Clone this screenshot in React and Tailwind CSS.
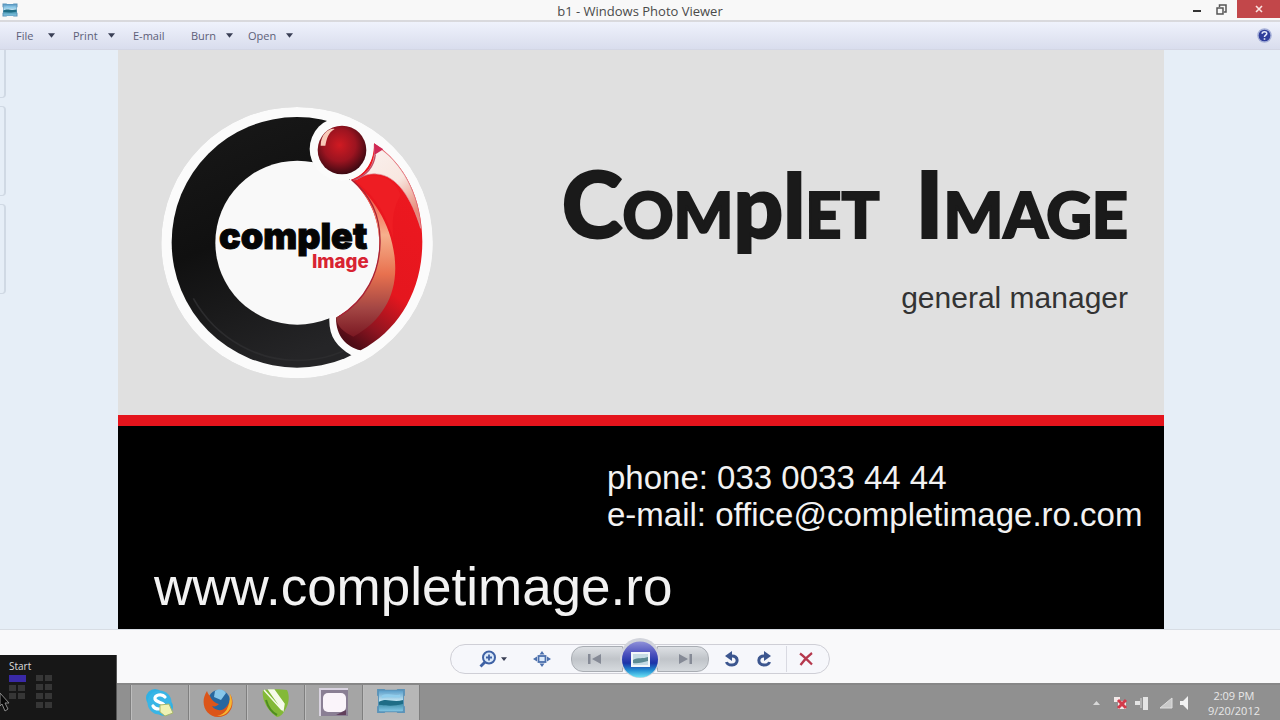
import React from "react";

function PhotoIcon({ className }) {
  return (
    <svg viewBox="0 0 32 28" className={className} aria-hidden="true">
      <defs>
        <linearGradient id="photoSky" x1="0" y1="0" x2="0" y2="1">
          <stop offset="0" stopColor="#5b9fca" />
          <stop offset="0.5" stopColor="#c4e6f4" />
          <stop offset="0.6" stopColor="#3a8ba5" />
          <stop offset="1" stopColor="#83c6e4" />
        </linearGradient>
      </defs>
      <path d="M1 1h8l1 1h12l1-1h8v7l-1 1v10l1 1v7h-8l-1-1H10l-1 1H1v-7l1-1V9L1 8z" fill="#5b93b8" />
      <rect x="3" y="3" width="26" height="22" rx="1" fill="url(#photoSky)" />
      <path d="M3 15c8-5 14 1 26-2v4c-11 3-17 2-26 1z" fill="#1f6d86" />
      <path d="M6 8c6-3 12 1 20-1v3c-8 1-13-1-20 1z" fill="#8fcdec" />
    </svg>
  );
}

function Caret({ className = "w-[7px] h-[5px]" }) {
  return (
    <svg viewBox="0 0 8 5" className={className} aria-hidden="true">
      <path d="M0 0h8L4 5z" fill="#3a3f55" />
    </svg>
  );
}

function TitleBar() {
  return (
    <header className="relative flex h-[22px] items-start justify-between border-b-2 border-[#d9d9dd] bg-[#f8f8f8]">
      <PhotoIcon className="mt-[3px] ml-[2px] h-[14px] w-4" />
      <h1 className="absolute inset-x-0 top-[2px] text-center text-[13px] leading-[18px] text-[#4a4a4a]">
        b1 - Windows Photo Viewer
      </h1>
      <div className="relative flex">
        <button aria-label="Minimize" className="flex h-[18px] w-6 items-center justify-center">
          <svg viewBox="0 0 10 10" className="h-[10px] w-[10px]"><path d="M1 7h8" stroke="#333" strokeWidth="2" /></svg>
        </button>
        <button aria-label="Restore" className="flex h-[18px] w-6 items-center justify-center">
          <svg viewBox="0 0 11 11" className="h-[11px] w-[11px]" fill="none" stroke="#555" strokeWidth="1.5">
            <path d="M1 4h6v6H1zM3.500 3V1H10v7H8" />
          </svg>
        </button>
        <button aria-label="Close" className="ml-1 flex h-[18px] w-[43px] items-center justify-center bg-[#c2474a]">
          <svg viewBox="0 0 8 8" className="h-2 w-2"><path d="M1 1l6 6M7 1L1 7" stroke="#fbe3e1" strokeWidth="1.600" /></svg>
        </button>
      </div>
    </header>
  );
}

function MenuBar() {
  const item = "flex items-center text-[11px] leading-[14px] text-[#5d6078]";
  return (
    <nav className="flex h-7 items-center justify-between border-b border-[#d3d6e4] bg-linear-to-b from-[#eff2fc] to-[#d9dded] pr-2 pl-4">
      <div className="flex items-center">
        <button className={item + " w-[57px] gap-[15px]"}>File <Caret /></button>
        <button className={item + " w-[60px] gap-[10px]"}>Print <Caret /></button>
        <button className={item + " w-[58px]"}>E-mail</button>
        <button className={item + " w-[57px] gap-[10px]"}>Burn <Caret /></button>
        <button className={item + " gap-[10px]"}>Open <Caret /></button>
      </div>
      <button aria-label="Help">
        <svg viewBox="0 0 16 16" className="h-[15px] w-[15px]">
          <circle cx="8" cy="8" r="7" fill="#2f3e9b" stroke="#a6b0d8" strokeWidth="1.500" />
          <path d="M5.500 6.200C5.600 3.200 10.500 3.300 10.400 6.100 10.300 7.600 8 7.700 8 9.500M8 11v1.600" fill="none" stroke="#e6ebfa" strokeWidth="1.700" />
        </svg>
      </button>
    </nav>
  );
}

function Logo() {
  return (
    <svg viewBox="0 0 900 885" className="h-[295px] w-[300px] shrink-0" role="img" aria-label="Complet Image logo">
      <defs>
        <linearGradient id="ring" x1="0" y1="0" x2="0.4" y2="1">
          <stop offset="0" stopColor="#191919" />
          <stop offset="0.5" stopColor="#101010" />
          <stop offset="1" stopColor="#252527" />
        </linearGradient>
        <linearGradient id="body" x1="0.6" y1="0" x2="0.3" y2="1">
          <stop offset="0" stopColor="#ef1820" />
          <stop offset="0.65" stopColor="#e5161e" />
          <stop offset="0.87" stopColor="#8e1420" />
          <stop offset="1" stopColor="#4f0c16" />
        </linearGradient>
        <linearGradient id="sheen" x1="0" y1="0" x2="0" y2="1">
          <stop offset="0" stopColor="#f3352d" />
          <stop offset="0.35" stopColor="#f6b08c" />
          <stop offset="0.6" stopColor="#e8714f" />
          <stop offset="0.82" stopColor="#a34644" />
          <stop offset="1" stopColor="#7a1822" />
        </linearGradient>
        <linearGradient id="glass" x1="0" y1="0" x2="0.6" y2="1">
          <stop offset="0" stopColor="#fbf3f1" />
          <stop offset="0.6" stopColor="#f8e7e0" />
          <stop offset="1" stopColor="#e88a78" />
        </linearGradient>
        <radialGradient id="ball" cx="0.45" cy="0.4" r="0.6">
          <stop offset="0" stopColor="#d01a22" />
          <stop offset="0.55" stopColor="#9c1420" />
          <stop offset="1" stopColor="#3d0912" />
        </radialGradient>
        <clipPath id="disc"><circle cx="441" cy="443" r="407" /></clipPath>
      </defs>
      <g clipPath="url(#disc)">
        <circle cx="441" cy="443" r="407" fill="#fbfbfb" />
        <circle cx="441" cy="442" r="376" fill="url(#ring)" />
        <path d="M130 610C200 735 330 800 450 796C520 794 555 778 580 768" fill="none" stroke="#2c2c2e" strokeWidth="5" />
        <path d="M520 50L700 30L900 200V700L640 800L603 780C560 755 535 725 538 665L600 560V250Z" fill="#fbfbfb" />
      </g>
      <circle cx="442" cy="443" r="246" fill="#f9f9f9" />
      <path d="M672 145C765 205 817 310 817 440C817 585 748 705 632 766C590 755 558 725 558 668C650 620 690 530 688 440C686 365 655 300 603 254C645 240 673 200 672 145Z" fill="url(#body)" />
      <path d="M605 255C668 305 728 390 735 500C742 595 700 675 610 725C580 712 558 690 559 667C648 620 690 535 688 440C686 365 655 300 605 255Z" fill="url(#sheen)" />
      <path d="M612 256C665 228 730 240 752 300C730 340 725 370 730 430C705 350 672 300 612 256Z" fill="#ee1d23" />
      <path d="M605 254C668 305 692 370 690 445C688 530 650 615 565 666" fill="none" stroke="#a82234" strokeWidth="4" />
      <path d="M672 148C760 202 806 300 812 400C785 310 740 240 680 237C655 234 638 244 618 254C655 235 680 205 672 148Z" fill="url(#glass)" stroke="#dd9aa2" strokeWidth="2" />
      <path d="M672 145L700 163L673 180Z" fill="#cf2854" />
      <path d="M676 178C672 215 648 242 610 256" fill="none" stroke="#c24c66" strokeWidth="4" />
      <circle cx="574" cy="162" r="95" fill="#fbfbfb" />
      <circle cx="576" cy="165" r="73" fill="url(#ball)" />
      <path d="M512 152C512 117 538 98 554 102C535 112 530 132 526 152Z" fill="#f8c9b8" />
      <text x="207" y="461" fontFamily="Inter, sans-serif" fontWeight="900" fontSize="108" fill="#050505" stroke="#050505" strokeWidth="3">complet</text>
      <text x="656" y="518" textAnchor="end" fontFamily="Inter, sans-serif" fontWeight="800" fontSize="56" fill="#d82332">Image</text>
    </svg>
  );
}

function BusinessCard() {
  return (
    <article className="flex flex-1 flex-col font-['Liberation_Sans',sans-serif]">
      <section className="flex flex-1 items-start justify-between bg-[#e0e0e0] pt-[45px] pr-9 pl-8">
        <Logo />
        <div className="flex flex-col items-end pt-[53px] text-[#1a1a1a]">
          <h2 className="flex gap-9 font-[Lato,sans-serif] text-[87px] leading-[110px] font-black whitespace-nowrap [-webkit-text-stroke:2px_#1a1a1a]">
            <span>
              <span className="text-[92px]">C</span>
              <span className="text-[63px]">OM</span>pl<span className="text-[63px]">ET</span>
            </span>
            <span>
              <span className="text-[92px]">I</span>
              <span className="text-[63px]">MAGE</span>
            </span>
          </h2>
          <p className="pt-[11px] text-[30px] leading-9 text-[#333]">general manager</p>
        </div>
      </section>
      <div className="h-[11px] bg-[#e4141c]" />
      <section className="flex h-[203px] flex-col justify-between bg-black pt-[33px] pr-6 pb-[14px] pl-9 text-[#f2f2f2]">
        <div className="w-[533px] self-end text-[33px] leading-[37px] whitespace-nowrap">
          <p>phone: 033 0033 44 44</p>
          <p>e-mail: office@completimage.ro.com</p>
        </div>
        <p className="text-[53px] leading-[56px]">www.completimage.ro</p>
      </section>
    </article>
  );
}

function Viewer() {
  return (
    <main className="flex flex-1 bg-[#e6eef7]">
      <div className="flex w-[118px] flex-col gap-2">
        <div className="h-12 w-[6px] rounded-br border-r-2 border-b border-[#d0d9e4]" />
        <div className="h-[90px] w-[6px] rounded-r border-y border-r-2 border-[#d0d9e4]" />
        <div className="h-[90px] w-[6px] rounded-r border-y border-r-2 border-[#d0d9e4]" />
      </div>
      <BusinessCard />
      <div className="w-[116px]" />
    </main>
  );
}

function Controls() {
  const skip = "flex h-[26px] items-center border border-[#a9adb3] bg-linear-to-b from-[#dde0e4] via-[#c0c4c9] to-[#d6dade]";
  return (
    <div className="flex h-[54px] items-center justify-center border-t border-[#d8dde4] bg-[#f9f9fa] pt-1">
      <div className="flex h-[30px] w-[380px] items-center rounded-full border border-[#cfcfd6] bg-[#f6f7fb]">
        <button aria-label="Zoom" className="ml-7 flex items-center gap-1">
          <svg viewBox="0 0 18 18" className="h-[18px] w-[18px]" fill="none" stroke="#3f62a5">
            <circle cx="10" cy="7.500" r="6" fill="#dceafa" strokeWidth="2" />
            <path d="M7 7.500h6M10 4.500v6" strokeWidth="1.800" />
            <path d="M6 12l-4.500 4.500" strokeWidth="2.800" />
          </svg>
          <Caret className="h-1 w-[6px]" />
        </button>
        <button aria-label="Fit to window" className="ml-[26px]">
          <svg viewBox="0 0 18 18" className="h-[18px] w-[18px]" fill="#4c70ad">
            <path d="M9 1l2.500 3.500h-5zM9 17l2.500-3.500h-5zM0 9l4-2.500v5zM18 9l-4-2.500v5z" />
            <rect x="5.500" y="6" width="7" height="6" fill="#dceafa" stroke="#4c70ad" strokeWidth="1.800" />
          </svg>
        </button>
        <div className="ml-5 flex items-center">
          <button aria-label="Previous" className={skip + " w-[52px] rounded-l-xl pl-4"}>
            <svg viewBox="0 0 14 10" className="h-[10px] w-[14px]" fill="#858a96"><path d="M0 0h2.500v10H0zM13 0v10L4 5z" /></svg>
          </button>
          <button aria-label="Play slide show" className="z-10 -mx-1 h-[42px] w-[42px]">
            <svg viewBox="0 0 42 42" className="h-[42px] w-[42px]">
              <defs>
                <linearGradient id="play" x1="0" y1="0" x2="0" y2="1">
                  <stop offset="0" stopColor="#8f90d8" />
                  <stop offset="0.35" stopColor="#4b50bd" />
                  <stop offset="0.6" stopColor="#1c33a8" />
                  <stop offset="0.8" stopColor="#228fd2" />
                  <stop offset="1" stopColor="#6ee5f6" />
                </linearGradient>
              </defs>
              <circle cx="21" cy="20" r="20" fill="#d2d4db" />
              <circle cx="21" cy="21.500" r="18" fill="url(#play)" />
              <rect x="12" y="14" width="19" height="15" fill="#f2f7fa" />
              <rect x="14" y="16" width="15" height="11" fill="#c4dbe4" />
              <path d="M14 22c5-3 10-1 15-3v4c-5 1-10 3-15 2z" fill="#5c8b94" />
            </svg>
          </button>
          <button aria-label="Next" className={skip + " w-[52px] justify-end rounded-r-xl pr-4"}>
            <svg viewBox="0 0 14 10" className="h-[10px] w-[14px]" fill="#858a96"><path d="M1 0v10l9-5zM11.500 0H14v10h-2.500z" /></svg>
          </button>
        </div>
        <button aria-label="Rotate counterclockwise" className="ml-[15px]">
          <svg viewBox="0 0 16 18" className="h-[18px] w-4">
            <path d="M7 6c8-1 8 9 1 9-3 0-5-1-5.500-3" fill="none" stroke="#3c568f" strokeWidth="3" />
            <path d="M1 6l7-5v10z" fill="#3c568f" />
          </svg>
        </button>
        <button aria-label="Rotate clockwise" className="ml-4">
          <svg viewBox="0 0 16 18" className="h-[18px] w-4">
            <path d="M9 6c-8-1-8 9-1 9 3 0 5-1 5.500-3" fill="none" stroke="#3c568f" strokeWidth="3" />
            <path d="M15 6l-7-5v10z" fill="#3c568f" />
          </svg>
        </button>
        <button aria-label="Delete" className="ml-[14px] border-l border-[#d9dae2] py-[6px] pl-3">
          <svg viewBox="0 0 14 14" className="h-[14px] w-[14px]" fill="none" stroke="#b5384d" strokeWidth="2.200">
            <path d="M1 1.500c4 3 8 7 12 11M13 1C9 4 5 8 1.500 13" />
          </svg>
        </button>
      </div>
    </div>
  );
}

function SkypeIcon() {
  return (
    <svg viewBox="0 0 32 30" className="h-[30px] w-8">
      <circle cx="11" cy="10" r="9" fill="#2fb1e4" />
      <circle cx="20" cy="19" r="9" fill="#2fb1e4" />
      <circle cx="15.500" cy="14.500" r="12" fill="#38b5e6" />
      <path d="M21 9c-3-4-11-2-10 2s10 3 9 7-9 4-11 0" fill="none" stroke="#fff" strokeWidth="3.200" strokeLinecap="round" />
      <path d="M16 17l9-1 4 9-8 3-5-4z" fill="#eef2b4" stroke="#a7b56a" />
    </svg>
  );
}

function FirefoxIcon() {
  return (
    <svg viewBox="0 0 32 30" className="h-[30px] w-8">
      <circle cx="17" cy="13" r="11" fill="#27679f" />
      <path d="M13 3c5-3 9-1 11 2l-5 7-7-3z" fill="#86c6ea" />
      <path d="M5 3c-8 12-1 26 11 26 13 0 18-14 12-23 1 5-1 9-3 12-4 6-12 5-15 0 3 1 5 0 7-2-5-1-8-5-9-8-1-1-2-2-3-5z" fill="#dc5519" />
      <path d="M28 6c6 12-3 23-13 22 8-1 13-8 13-22z" fill="#f5b632" />
    </svg>
  );
}

function CorelIcon() {
  return (
    <svg viewBox="0 0 32 30" className="h-[30px] w-8">
      <path d="M3 2c8-1 17-1 24 0 3 6 2 14-2 20-2 4-5 7-8 7C9 24 1 12 3 2z" fill="#83b937" />
      <path d="M4 2l18 20M9 2l14 20 1-6L14 2z" stroke="#f5faea" fill="#f5faea" strokeWidth="1.500" />
      <path d="M6 12c2 7 5 12 11 15" fill="none" stroke="#4f8c20" strokeWidth="2" />
    </svg>
  );
}

function CaptureIcon() {
  return (
    <svg viewBox="0 0 32 30" className="h-[30px] w-8">
      <rect x="2" y="1" width="28" height="27" fill="#8a7f94" />
      <path d="M2 28V1h28" fill="none" stroke="#d9d3e0" strokeWidth="2" />
      <rect x="5" y="5" width="23" height="19" rx="5" fill="#faf4fa" />
      <path d="M18 27h10v-5z" fill="#62405c" />
    </svg>
  );
}

function Taskbar() {
  const task = "flex w-[58px] items-center justify-center border-l border-[#7f7f7f] shadow-[inset_1px_0_0_#bdbdbd]";
  return (
    <footer className="relative flex h-[37px] justify-between border-t-2 border-[#878787] bg-[#909090] pl-[130px]">
      <div className="flex">
        <button aria-label="Skype" className={task + " bg-[#a5a5a5]"}><SkypeIcon /></button>
        <button aria-label="Firefox" className={task + " bg-[#a5a5a5]"}><FirefoxIcon /></button>
        <button aria-label="CorelDRAW" className={task + " bg-[#a5a5a5]"}><CorelIcon /></button>
        <button aria-label="Screen capture" className={task + " bg-[#a5a5a5]"}><CaptureIcon /></button>
        <button aria-label="Photo Viewer" className={task + " border-r bg-[#b7b7b7]"}><PhotoIcon className="mb-1 h-[26px] w-8" /></button>
      </div>
      <div className="flex items-center gap-2 pr-5">
        <svg viewBox="0 0 100 20" className="mr-3 h-5 w-[100px]" aria-hidden="true">
          <path d="M5 12l3.500-4 3.500 4z" fill="#d8d8d8" />
          <path d="M26 4h6v5h-6zM30 8h8v8h-8z" fill="#f2e9e9" />
          <path d="M30 7l8 8M38 7l-8 8" stroke="#d23a4a" strokeWidth="3" />
          <path d="M47 8h5v4h-5zM55 4h5v13h-5z" fill="#e4e4e4" />
          <path d="M53 5v10" stroke="#d8d8d8" />
          <path d="M72 15h12V5z" fill="#c9c9c9" stroke="#dedede" />
          <path d="M92 8h3l5-5v14l-5-5h-3z" fill="#f2f2f2" />
        </svg>
        <time className="text-center text-[11px] leading-[15px] text-[#e8e8e8]">
          <span className="block">2:09 PM</span>
          <span className="block">9/20/2012</span>
        </time>
      </div>
      <button className="absolute bottom-0 left-0 flex h-[65px] w-[117px] flex-col items-start border-r border-[#555] bg-[#171717] pt-1 pl-[9px] text-[10px] leading-[14px] text-[#dedede]">
        Start
        <svg viewBox="0 0 46 38" className="h-[38px] w-[46px]" aria-hidden="true">
          <rect x="0" y="2" width="17" height="7" fill="#3929a6" />
          <g fill="#363636">
            <path d="M0 12h7v6H0zM9 12h7v6H9zM0 20h7v6H0zM9 20h7v6H9zM27 2h7v6h-7zM36 2h7v6h-7zM27 11h7v6h-7zM36 11h7v6h-7zM27 20h7v6h-7zM36 20h7v6h-7zM27 29h7v6h-7zM36 29h7v6h-7z" />
          </g>
        </svg>
        <svg viewBox="0 0 12 19" className="absolute bottom-2 left-0 h-[19px] w-3" aria-hidden="true">
          <path d="M0 0l9 10H5l3 6-3 2-3-7-2 2z" fill="#080808" stroke="#8a8a8a" />
        </svg>
      </button>
    </footer>
  );
}

export default function App() {
  return (
    <div className="flex min-h-screen flex-col bg-[#f9f9fa] font-['Open_Sans','Noto_Sans',sans-serif]">
      <TitleBar />
      <MenuBar />
      <Viewer />
      <Controls />
      <Taskbar />
    </div>
  );
}
